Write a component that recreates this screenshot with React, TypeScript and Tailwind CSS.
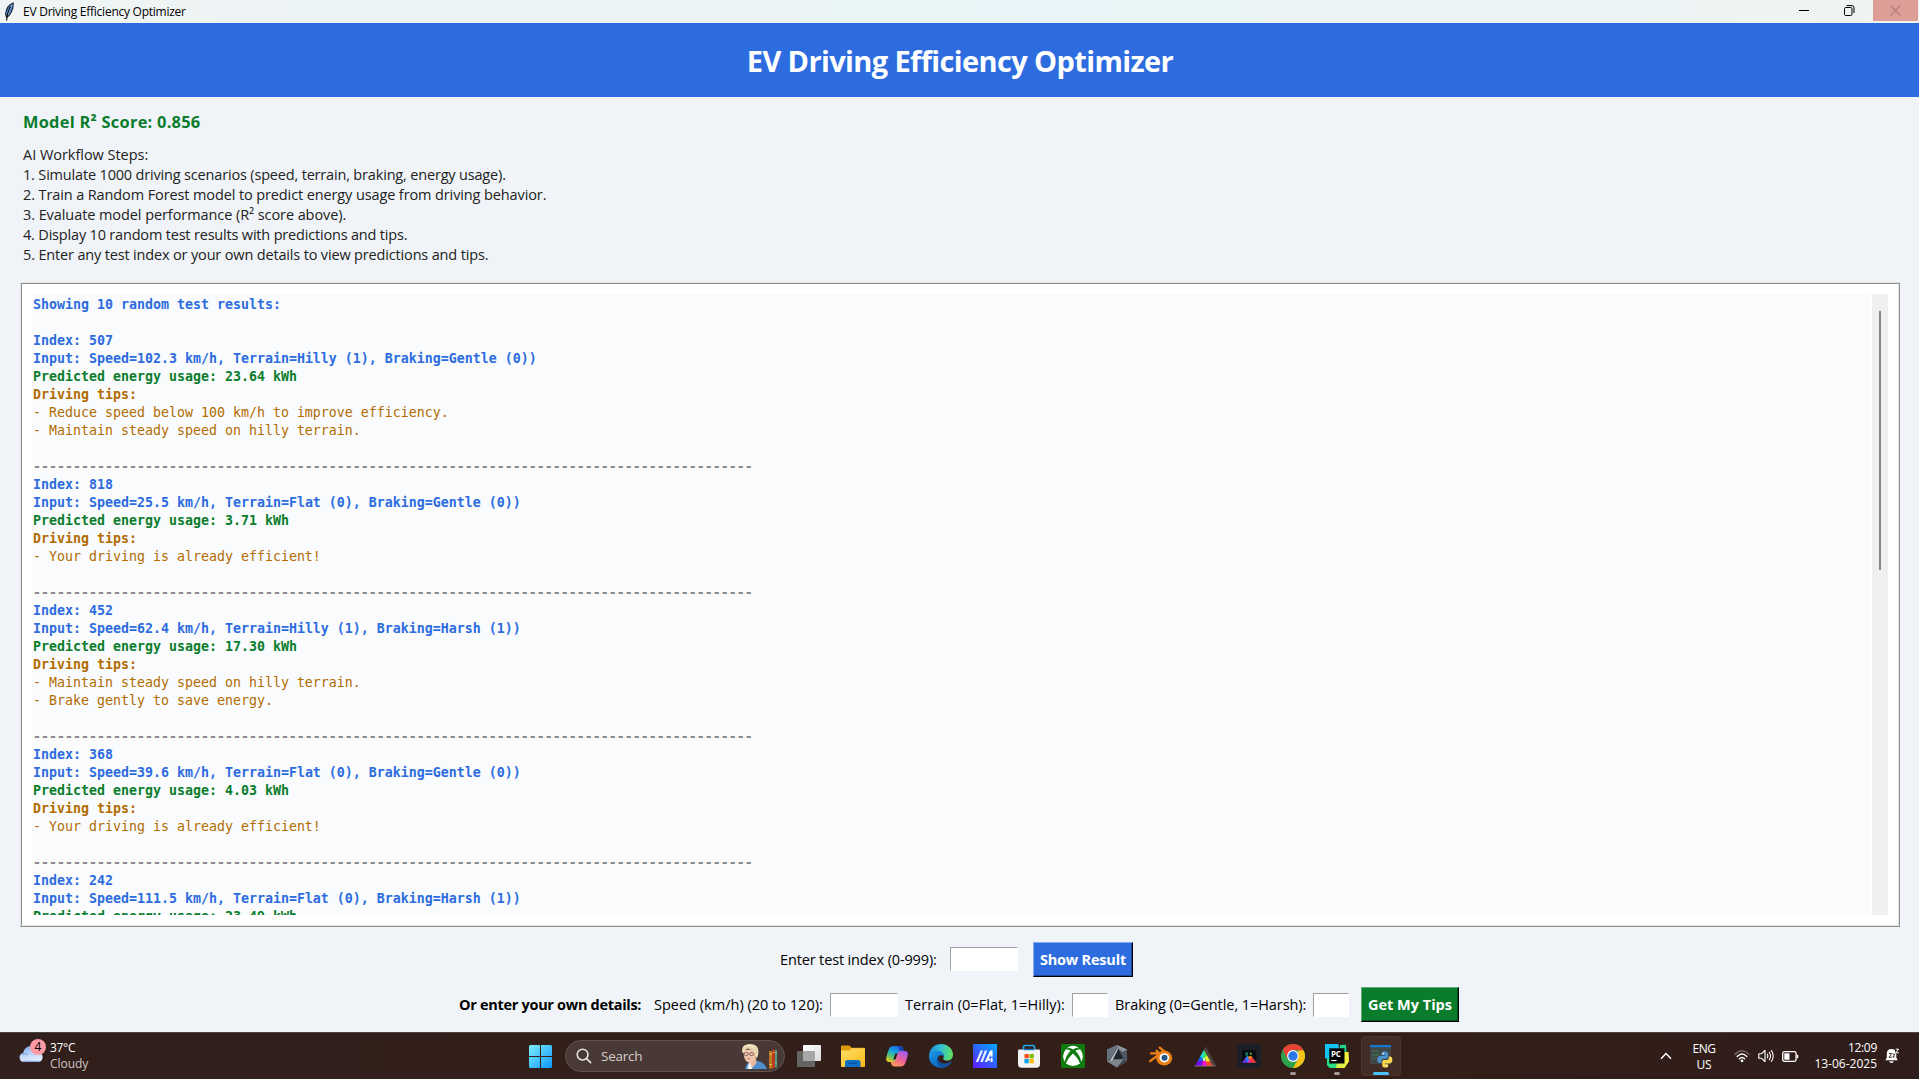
import type { ReactNode } from "react";

type Result = { index: number; input: string; energy: string; tips: string[] };

const results: Result[] = [
  {
    index: 507,
    input: "Speed=102.3 km/h, Terrain=Hilly (1), Braking=Gentle (0))",
    energy: "23.64",
    tips: ["Reduce speed below 100 km/h to improve efficiency.", "Maintain steady speed on hilly terrain."],
  },
  {
    index: 818,
    input: "Speed=25.5 km/h, Terrain=Flat (0), Braking=Gentle (0))",
    energy: "3.71",
    tips: ["Your driving is already efficient!"],
  },
  {
    index: 452,
    input: "Speed=62.4 km/h, Terrain=Hilly (1), Braking=Harsh (1))",
    energy: "17.30",
    tips: ["Maintain steady speed on hilly terrain.", "Brake gently to save energy."],
  },
  {
    index: 368,
    input: "Speed=39.6 km/h, Terrain=Flat (0), Braking=Gentle (0))",
    energy: "4.03",
    tips: ["Your driving is already efficient!"],
  },
  {
    index: 242,
    input: "Speed=111.5 km/h, Terrain=Flat (0), Braking=Harsh (1))",
    energy: "23.49",
    tips: [],
  },
];

const separator = "-".repeat(90);

function FeatherIcon() {
  return (
    <svg width="12" height="20" viewBox="0 0 12 20">
      <path d="M9.2 1 C5 2.5 2 7 1.6 12.5 L2.6 15.5 C6 13.5 9.6 8 9.2 1Z" fill="#4b86c6" stroke="#15202c" strokeWidth="1.1" />
      <path d="M8.3 3 C5.8 6 4.6 9.5 4.2 13" fill="none" stroke="#a9cdf0" strokeWidth="1" />
      <path d="M6.6 4.5 C4 9 3 14 2.6 18.6" fill="none" stroke="#111" strokeWidth="1.1" />
    </svg>
  );
}

function TitleBar() {
  return (
    <header className="flex h-[23px] items-start bg-linear-to-r from-[#f0f4f4] via-[#e9f5f8] via-55% to-[#f0f4f3]">
      <div className="flex h-[23px] flex-1 items-center pl-[4px]">
        <FeatherIcon />
        <span className="pl-[7px] text-[12px] leading-[22px] tracking-[-0.25px] text-black">EV Driving Efficiency Optimizer</span>
      </div>
      <div className="flex h-[21px]">
        <div className="flex w-[45px] justify-center pt-[10px]">
          <div className="mr-[3px] h-px w-[10px] bg-black" />
        </div>
        <div className="flex w-[45px] justify-center pt-[5px]">
          <svg className="mr-[3px]" width="11" height="11" viewBox="0 0 11 11" fill="none" stroke="#000" strokeWidth="1">
            <rect x="0.5" y="2.5" width="7.5" height="8" rx="1.2" />
            <path d="M2.5 0.6 H8 Q10 0.6 10 2.8 V8" />
          </svg>
        </div>
        <div className="mr-px flex w-[45px] justify-center bg-[#dd9e98] pt-[5px]">
          <svg className="mr-px" width="11" height="11" viewBox="0 0 11 11" stroke="#b27f7a" strokeWidth="1.2">
            <path d="M0.5 0.5 L10.5 10.5 M10.5 0.5 L0.5 10.5" />
          </svg>
        </div>
      </div>
    </header>
  );
}

function Steps() {
  return (
    <div className="mt-[11px] text-[14.5px] leading-[20px] whitespace-nowrap text-[#222]">
      <p className="tracking-[-0.03px]">AI Workflow Steps:</p>
      <p className="tracking-[-0.173px]">1. Simulate 1000 driving scenarios (speed, terrain, braking, energy usage).</p>
      <p className="tracking-[-0.112px]">2. Train a Random Forest model to predict energy usage from driving behavior.</p>
      <p className="tracking-[-0.075px]">3. Evaluate model performance (R² score above).</p>
      <p className="tracking-[-0.185px]">4. Display 10 random test results with predictions and tips.</p>
      <p className="tracking-[-0.16px]">5. Enter any test index or your own details to view predictions and tips.</p>
    </div>
  );
}

function ResultBlock({ result }: { result: Result }) {
  return (
    <>
      <p className="font-bold text-[#2d6cdf]">Index: {result.index}</p>
      <p className="font-bold text-[#2d6cdf]">Input: {result.input}</p>
      <p className="font-bold text-[#0a7d2c]">Predicted energy usage: {result.energy} kWh</p>
      <p className="font-bold text-[#b36b00]">Driving tips:</p>
      {result.tips.map((tip) => (
        <p key={tip} className="text-[#b36b00]">- {tip}</p>
      ))}
      <p>&nbsp;</p>
      <p className="font-bold text-[#888]">{separator}</p>
    </>
  );
}

function ResultsPanel() {
  return (
    <section className="mx-5 mr-[19px] h-[645px] border border-t-[#e3e3e3] border-r-[#8f8f8f] border-b-[#8f8f8f] border-l-[#e3e3e3]">
      <div className="flex h-[643px] border border-t-[#8f8f8f] border-r-[#e3e3e3] border-b-[#e3e3e3] border-l-[#8f8f8f] bg-white p-[10px]">
        <div
          className="flex-1 overflow-hidden bg-[#f9fbfd] pt-[2px] pl-px text-[13.29px] leading-[18px] whitespace-pre"
          style={{ fontFamily: '"DejaVu Sans Mono", monospace' }}
        >
          <p className="font-bold text-[#2d6cdf]">Showing 10 random test results:</p>
          <p>&nbsp;</p>
          {results.map((r) => (
            <ResultBlock key={r.index} result={r} />
          ))}
        </div>
        <div className="ml-px flex w-4 justify-center bg-[#f0f0f0] pt-[17px]">
          <div className="h-[259px] w-[2px] bg-[#858585]" />
        </div>
      </div>
    </section>
  );
}

function Entry({ wide = false }: { wide?: boolean }) {
  return (
    <input
      className={`${wide ? "w-[68px]" : "w-[36px]"} h-6 shrink-0 rounded-none border border-t-[#a0a0a0] border-r-white border-b-white border-l-[#a0a0a0] bg-white px-1 text-[14px] outline-none`}
    />
  );
}

function Forms() {
  return (
    <div className="text-[14.5px] whitespace-nowrap text-black">
      <div className="mt-[15px] flex h-[35px] items-center pl-[780px]">
        <label className="w-[170px] tracking-[-0.14px]">Enter test index (0-999):</label>
        <div className="pb-[1px]"><Entry wide /></div>
        <button className="ml-[15px] h-[35px] w-[100px] border border-t-[#86aaf0] border-r-black border-b-black border-l-[#86aaf0] bg-[#2d6cdf] font-bold tracking-[-0.2px] text-white shadow-[inset_-1px_-1px_0_#1e4895]">
          Show Result
        </button>
      </div>
      <div className="mt-[10px] flex h-[35px] items-center pl-[459px]">
        <span className="w-[195px] font-bold tracking-[-0.3px]">Or enter your own details:</span>
        <label className="w-[176px] tracking-[0.01px]">Speed (km/h) (20 to 120):</label>
        <Entry wide />
        <label className="ml-[7px] w-[167px] tracking-[0.04px]">Terrain (0=Flat, 1=Hilly):</label>
        <Entry />
        <label className="ml-[7px] w-[198px] tracking-[-0.07px]">Braking (0=Gentle, 1=Harsh):</label>
        <Entry />
        <button className="ml-[12px] h-[35px] w-[98px] border border-t-[#5cae74] border-r-black border-b-black border-l-[#5cae74] bg-[#0a7d2c] font-bold text-white shadow-[inset_-1px_-1px_0_#07531d]">
          Get My Tips
        </button>
      </div>
    </div>
  );
}

function WeatherIcon() {
  return (
    <div className="relative h-[24px] w-[28px]">
      <svg className="absolute top-[6px] left-0" width="25" height="18" viewBox="0 0 25 18">
        <defs>
          <linearGradient id="cloud" x1="0" y1="0" x2="0.3" y2="1">
            <stop offset="0" stopColor="#7fa5ea" />
            <stop offset="0.55" stopColor="#b9d2fa" />
            <stop offset="1" stopColor="#e3eefd" />
          </linearGradient>
        </defs>
        <path d="M5 17 A4.6 4.6 0 0 1 4.2 7.9 C5 3.5 8.5 1 12.5 1 C17 1 19.6 4 20 7.6 A4.8 4.8 0 0 1 19.5 17Z" fill="url(#cloud)" />
        <path d="M4 16.3 H20.5" stroke="#7fa0e8" strokeWidth="1.2" />
        <path d="M3 9.5 Q6 7.5 9 9.6" fill="none" stroke="#6f98e4" strokeWidth="0.9" />
      </svg>
      <span className="absolute top-0 left-[11px] flex h-4 w-4 items-center justify-center rounded-full bg-[#ff99a4] text-[12px] leading-none text-black">4</span>
    </div>
  );
}

function SearchArt() {
  return (
    <svg width="36" height="27" viewBox="0 0 36 27">
      <path d="M4 26 Q5 20 10 18.5 L15 17.5 Q24 19 26 26Z" fill="#4f8fd0" />
      <path d="M8 16 L15 15 L15.5 20 L10.5 26 L7.5 21Z" fill="#eab79c" />
      <path d="M7 22 L9.5 19.5 L11 26 H6.5Z" fill="#eef3f8" />
      <path d="M3 7 Q2 15 5.5 18.5 Q9 20.5 13 17.5 Q16 14 15.5 6Z" fill="#f1c7ad" />
      <path d="M1 8 Q0.5 1.5 8 1 Q17.5 0.5 17.5 8.5 Q17.6 13 15.3 15.5 Q14.2 12 14 8.5 Q10 6.5 7 5.6 Q4 6 3.2 10.5 Q1.4 10 1 8Z" fill="#e8d7ae" />
      <path d="M3 4 Q8 1 14 4" fill="none" stroke="#fbf0d0" strokeWidth="1.2" />
      <rect x="3.2" y="9.6" width="4" height="3" rx="1.4" fill="none" stroke="#6a4f48" strokeWidth="0.8" />
      <rect x="8.7" y="9.6" width="4" height="3" rx="1.4" fill="none" stroke="#6a4f48" strokeWidth="0.8" />
      <path d="M6 15.8 H9.5" stroke="#b2625c" strokeWidth="0.8" />
      <path d="M28 8 H31.8 V25.5 H28Z" fill="#b8791f" />
      <path d="M31.4 6.5 L34 6.8 V25 H31.4Z" fill="#c5301f" />
      <path d="M33.9 7 H36 V24.5 H33.9Z" fill="#4d9a86" />
      <path d="M28.5 11 H31 M28.5 21.5 H31 M32 9.5 H33.4 M34.4 10 H35.6 M34.4 20 H35.6" stroke="#f2d07c" strokeWidth="0.9" />
    </svg>
  );
}

function StartIcon() {
  return (
    <svg width="23" height="23" viewBox="0 0 23 23">
      <defs>
        <linearGradient id="win" x1="0" y1="0" x2="1" y2="1">
          <stop offset="0" stopColor="#7ceeff" />
          <stop offset="1" stopColor="#1097fb" />
        </linearGradient>
      </defs>
      <path d="M1 0 H11 V11 H0 V1Z M12 0 H22 L23 1 V11 H12Z M0 12 H11 V23 H1 L0 22Z M12 12 H23 V22 L22 23 H12Z" fill="url(#win)" />
    </svg>
  );
}

function TaskViewIcon() {
  return (
    <svg width="24" height="24" viewBox="0 0 24 24">
      <defs>
        <linearGradient id="tv" x1="0" y1="0" x2="1" y2="1">
          <stop offset="0" stopColor="#ffffff" />
          <stop offset="1" stopColor="#dcdcdc" />
        </linearGradient>
      </defs>
      <rect x="0" y="7" width="18" height="16" rx="1" fill="#666563" />
      <rect x="6" y="1" width="18" height="16" rx="1" fill="url(#tv)" />
      <rect x="6" y="7" width="12" height="10" fill="#a8a7a7" />
    </svg>
  );
}

function FolderIcon() {
  return (
    <svg width="24" height="24" viewBox="0 0 24 24">
      <defs>
        <linearGradient id="fold" x1="0" y1="0" x2="1" y2="1">
          <stop offset="0" stopColor="#ffe06a" />
          <stop offset="1" stopColor="#f8b916" />
        </linearGradient>
      </defs>
      <path d="M0 2.5 Q0 1.5 1 1.5 H8.5 L10.5 3.8 H23 Q24 3.8 24 5 V12 H0Z" fill="#e09d0b" />
      <path d="M0 6.5 H8.5 L10.5 4.2 H23.2 Q24 4.2 24 5.2 V22 Q24 23 23 23 H1 Q0 23 0 22Z" fill="url(#fold)" />
      <path d="M4 23 V18.5 Q4 16 6.5 16 H17 Q19.5 16 19.5 18.5 V23Z" fill="#0c70c4" />
      <path d="M7.5 19.3 H16" stroke="#05539c" strokeWidth="1.2" />
    </svg>
  );
}

function CopilotIcon() {
  return (
    <svg width="24" height="24" viewBox="0 0 24 24">
      <defs>
        <linearGradient id="cpA" x1="0.7" y1="0" x2="0.2" y2="1">
          <stop offset="0" stopColor="#1a5fe0" />
          <stop offset="0.4" stopColor="#18a7dd" />
          <stop offset="0.7" stopColor="#5cc46a" />
          <stop offset="1" stopColor="#f0ce1c" />
        </linearGradient>
        <linearGradient id="cpB" x1="0.8" y1="0" x2="0.2" y2="1">
          <stop offset="0" stopColor="#9a5cf2" />
          <stop offset="0.5" stopColor="#f0609c" />
          <stop offset="1" stopColor="#ffa04e" />
        </linearGradient>
      </defs>
      <path d="M8.5 2 H15 Q17.3 2 18 4.3 L18.8 7 H16.5 Q14.4 7 13.8 9 L11.4 16 Q10.7 18 8.8 18 H4.2 Q0.4 18 1.3 13.6 Q2.3 9 4 5 Q5.3 2 8.5 2Z" fill="url(#cpA)" />
      <path d="M13.5 2 H15 Q17.3 2 18 4.3 L18.8 7 H15 Q13.6 6 13.5 2Z" fill="#1b44b8" />
      <path d="M15.5 22.5 H9.5 Q7.2 22.5 6.3 20 L5.5 17.8 H7.8 Q9.8 17.8 10.4 15.8 L12.7 9 Q13.4 7 15.3 7 H19.5 Q23.7 7 22.7 11.3 Q21.7 15.6 20.2 19.3 Q18.8 22.5 15.5 22.5Z" fill="url(#cpB)" />
      <path d="M10.3 9.5 H12.5 L10.6 15.5 H8.3Z" fill="#2f1d18" />
    </svg>
  );
}

function EdgeIcon() {
  return (
    <svg width="24" height="24" viewBox="0 0 24 24">
      <defs>
        <linearGradient id="edTop" x1="0" y1="0.4" x2="1" y2="0.5">
          <stop offset="0" stopColor="#1a8fe0" />
          <stop offset="0.5" stopColor="#34c2cf" />
          <stop offset="1" stopColor="#62e05a" />
        </linearGradient>
        <linearGradient id="edMid" x1="0" y1="0" x2="0.6" y2="1">
          <stop offset="0" stopColor="#1c9ce8" />
          <stop offset="1" stopColor="#0b63bd" />
        </linearGradient>
      </defs>
      <path d="M0 11.5 C0.3 4.8 5.6 0 12 0 C19 0 24 5 24 10.8 C24 14.5 21.4 16.6 18.3 16.6 C15.5 16.6 13.9 15.5 14.2 14.4 C15.6 13 15 9.2 11 7.8 C6.5 6.5 2 8 0 11.5Z" fill="url(#edTop)" />
      <path d="M0 11.8 C1 7.8 5 6.2 8.6 6.7 C12.6 7.3 15 9.8 14.9 12.6 C12.5 10 8.4 11.2 8.2 15.5 C8.1 19.6 11.5 23 15.5 23.5 C7 25.5 -0.4 19.5 0 11.8Z" fill="url(#edMid)" />
      <path d="M9.6 12.2 C7.2 18.2 14.5 21.8 22 17.6 C22.6 17.3 23 17.8 22.6 18.3 C20.4 21.5 17.5 23.4 14.8 23.7 C9.6 23.2 5.4 17.3 9.6 12.2Z" fill="#11529e" />
    </svg>
  );
}

function MyAsusIcon() {
  return (
    <svg width="24" height="24" viewBox="0 0 24 24">
      <defs>
        <linearGradient id="asus" x1="0.1" y1="1" x2="0.9" y2="0">
          <stop offset="0" stopColor="#5a20ff" />
          <stop offset="0.5" stopColor="#2e62ff" />
          <stop offset="1" stopColor="#08a4ff" />
        </linearGradient>
      </defs>
      <rect width="24" height="24" fill="url(#asus)" />
      <path d="M2.8 18 H5.2 L10 6.5 H7.6Z M7.3 18 H9.7 L14.2 6.5 H11.8Z" fill="#e9ecff" />
      <path d="M11.7 18 L17.2 6.5 H19.6 V12.8 H17.6 V10.6 L14 18Z" fill="#fff" />
      <path d="M14.8 14.6 H17 V16.4 H14.2Z M17.6 14 H19.6 V18 H17.6Z" fill="#fff" />
    </svg>
  );
}

function StoreIcon() {
  return (
    <svg width="24" height="24" viewBox="0 0 24 24">
      <path d="M6.5 7 V3 Q6.5 1.5 8 1.5 H16 Q17.5 1.5 17.5 3 V7" fill="none" stroke="#22a5ec" strokeWidth="1.7" />
      <path d="M1 6.5 Q1 5.5 2 5.5 H22 Q23 5.5 23 6.5 V20 Q23 23.8 19.5 23.8 H4.5 Q1 23.8 1 20Z" fill="#f3f3f4" />
      <path d="M6.5 5.5 H17.5" stroke="#1474b8" strokeWidth="1.4" />
      <rect x="7.5" y="10" width="4.3" height="4.3" fill="#f25022" />
      <rect x="12.5" y="10" width="4.3" height="4.3" fill="#7fba00" />
      <rect x="7.5" y="15" width="4.3" height="4.3" fill="#00a4ef" />
      <rect x="12.5" y="15" width="4.3" height="4.3" fill="#ffb900" />
    </svg>
  );
}

function XboxIcon() {
  return (
    <svg width="24" height="24" viewBox="0 0 24 24">
      <rect width="24" height="24" rx="1.5" fill="#107c10" />
      <circle cx="12" cy="12.2" r="9.9" fill="#fff" />
      <path d="M6 4.4 Q8.5 3.4 12 6 Q15.5 3.4 18 4.4 Q16 1.8 12 1.8 Q8 1.8 6 4.4Z" fill="#fff" />
      <path d="M5 4.6 Q8.5 3.2 12 5.4 Q15.5 3.2 19 4.6 L19.4 5.6 Q16.8 5 14.4 6.8 Q19.5 12 20.2 18 L19 19.6 Q17.5 14.5 12 9.4 Q6.5 14.5 5 19.6 L3.8 18 Q4.5 12 9.6 6.8 Q7.2 5 4.6 5.6Z" fill="#107c10" />
    </svg>
  );
}

function ArmouryIcon() {
  return (
    <svg width="24" height="24" viewBox="0 0 24 24">
      <path d="M12 1 L22 5.5 V17.5 L12 23.5 L2 17.5 V5.5Z" fill="#4f5862" />
      <path d="M12 1 L22 5.5 L17.5 8 L12.5 4Z" fill="#8c969f" />
      <path d="M2 5.5 L12 1 L12.5 4 L6 13 L2 17.5Z" fill="#68727c" />
      <path d="M13 4.5 L18.5 14.5 L8 16Z" fill="#20252b" />
      <path d="M6 15.5 L18.8 15.2 L12 23.5 L2 17.5Z" fill="#7d868e" />
      <path d="M12.6 4 L5 16.5 L7.4 16.5 L13 5.5Z" fill="#b4bbc1" />
      <path d="M18.8 15.2 L22 17.5 L12 23.5Z" fill="#3f474f" />
    </svg>
  );
}

function BlenderIcon() {
  return (
    <svg width="24" height="24" viewBox="0 0 24 24">
      <path d="M2 9.4 H10.5 L7.6 6.8 M10.8 3.6 L17 8.8 M1.2 17.2 L10 10.3" fill="none" stroke="#ea7f16" strokeWidth="2.3" strokeLinecap="round" />
      <ellipse cx="15.2" cy="14" rx="8" ry="7.4" fill="#ea7f16" />
      <ellipse cx="15.4" cy="13.8" rx="4.9" ry="4.6" fill="#fff" />
      <circle cx="15.5" cy="13.7" r="3" fill="#265787" />
    </svg>
  );
}

function PrismIcon() {
  return (
    <svg width="24" height="24" viewBox="0 0 24 24">
      <path d="M12.8 2.5 L23 21.5 L19.5 22 L10.5 6.5Z" fill="#4c4442" />
      <path d="M11 6 L14.5 12.3 L11 17.5 L7.3 12.6Z" fill="#43e552" />
      <path d="M11 6 L7.3 12.6 L8.3 17 L11 12Z" fill="#1fd5cf" />
      <path d="M7.3 12.6 L4.8 17 L9 19 L9.5 14.5Z" fill="#1a62ff" />
      <path d="M4.8 17 L2 22 H10 L9.5 17Z" fill="#6d0fe8" />
      <path d="M9.8 16 L14 17.5 L15 22 H9Z" fill="#f013c8" />
      <path d="M12 12.5 L14.5 12.3 L17.4 17.4 L13 18.4Z" fill="#eef02a" />
      <path d="M13 17.5 L17.4 17.4 L20 22 H13.8Z" fill="#f6452a" />
      <path d="M10.3 14.5 L11.3 13.5 L12.4 16.8 L10.6 17Z" fill="#f3fff0" />
      <path d="M1.5 22 H22.5" stroke="#8b8685" strokeWidth="0.8" />
    </svg>
  );
}

function DarkPrismIcon() {
  return (
    <svg width="24" height="24" viewBox="0 0 24 24">
      <rect width="24" height="24" fill="#1c1e28" />
      <rect x="5" y="6" width="14.5" height="12.5" rx="2" fill="#0a0b10" />
      <path d="M8 9 L11 8 L10.6 12 L8.6 11.5Z" fill="#14806f" />
      <path d="M12.5 8.2 L15 9.5 L13.8 11.2Z" fill="#6be03a" />
      <path d="M5 18.7 L8.4 13.8 L10.4 18.7Z" fill="#6a36ee" />
      <path d="M8.4 13.8 L10.6 11.6 L12.5 16 L10.4 18.7Z" fill="#2f83ff" />
      <path d="M10.6 12.6 L14.6 12 L15.5 14.5 L12.3 15.5Z" fill="#ff8b27" />
      <path d="M12.3 15.2 L15.5 13.6 L19.5 18.7 H14Z" fill="#f33a43" />
      <path d="M10.2 18.7 L12.3 15 L14.5 18.7Z" fill="#ec2fae" />
    </svg>
  );
}

function ChromeIcon() {
  return (
    <svg width="24" height="24" viewBox="0 0 24 24">
      <circle cx="12" cy="12" r="12" fill="#2fa24c" />
      <path d="M12 24 L17.2 15 L17 6.2 H22.5 A12 12 0 0 1 12 24Z" fill="#fbc116" />
      <path d="M1.6 6 A12 12 0 0 1 22.5 6.2 H12 L6.8 15Z" fill="#e94335" />
      <circle cx="12" cy="12" r="5.9" fill="#fff" />
      <circle cx="12" cy="12" r="4.7" fill="#2e77e8" />
    </svg>
  );
}

function PyCharmIcon() {
  return (
    <div className="relative h-6 w-6">
      <svg className="absolute inset-0" width="24" height="24" viewBox="0 0 24 24">
        <path d="M0 0 H13.5 L14.5 12 L5 16 L0 14Z" fill="#14c4f2" />
        <path d="M15 1 L21 0.8 L21.5 10 L14 12Z" fill="#1fd68e" />
        <path d="M19 8 H23.6 L24 17.5 L19.5 24 H13 L16 12Z" fill="#f3ef3d" />
        <path d="M2 15 L8 12 L17 18 L14 24 H4.5 L2 21Z" fill="#2adf83" />
        <path d="M12 18 L20 17 L19 22 L14 24 H11Z" fill="#d8ee4a" />
        <rect x="4.3" y="4.3" width="15.2" height="15.2" fill="#000" />
        <rect x="6.3" y="16" width="5.3" height="1.1" fill="#fff" />
      </svg>
      <span className="absolute top-[6px] left-[6px] text-[8px] leading-none font-bold tracking-[-0.2px] text-white">PC</span>
    </div>
  );
}

function PythonWindowIcon() {
  return (
    <svg width="24" height="24" viewBox="0 0 24 24">
      <rect x="1" y="1" width="21" height="19" fill="#42484a" />
      <rect x="1" y="1" width="21" height="2.2" fill="#1277cf" />
      <path d="M3 7 H6 M3 11 H10 M3 14.5 H6 M7 7 H10" stroke="#3b7148" strokeWidth="1.4" />
      <path d="M15.4 7.6 C12.8 7.6 12.6 8.8 12.6 9.8 V11.2 H16 V12 H11 C9.2 12 8.2 13.4 8.2 15.6 C8.2 17.6 9.2 19 10.8 19 H12.4 V17 C12.4 15.4 13.6 14.8 14.6 14.8 H17 C18.4 14.8 19 14 19 12.8 V9.8 C19 8 17.4 7.6 15.4 7.6Z" fill="#4a93cf" />
      <path d="M16.4 23.6 C19 23.6 19.2 22.4 19.2 21.4 V20.2 H16 V19.4 H20.6 C22.4 19.4 23.4 18 23.4 15.8 C23.4 13.6 22.4 12.4 20.8 12.4 H19.8 V14 C19.8 15.4 18.6 16 17.6 16 H15 C13.8 16 13.2 16.8 13.2 18 V21.2 C13.2 23 14.6 23.6 16.4 23.6Z" fill="#fbd750" />
      <circle cx="14.2" cy="9.6" r="0.8" fill="#fff" />
      <circle cx="17.6" cy="21.7" r="0.8" fill="#fff" />
    </svg>
  );
}

type Task = { name: string; icon: ReactNode; state?: "open" | "active" };

const tasks: Task[] = [
  { name: "task-view", icon: <TaskViewIcon /> },
  { name: "explorer", icon: <FolderIcon /> },
  { name: "copilot", icon: <CopilotIcon /> },
  { name: "edge", icon: <EdgeIcon /> },
  { name: "myasus", icon: <MyAsusIcon /> },
  { name: "store", icon: <StoreIcon /> },
  { name: "xbox", icon: <XboxIcon /> },
  { name: "armoury", icon: <ArmouryIcon /> },
  { name: "blender", icon: <BlenderIcon /> },
  { name: "prism", icon: <PrismIcon /> },
  { name: "dark-prism", icon: <DarkPrismIcon /> },
  { name: "chrome", icon: <ChromeIcon />, state: "open" },
  { name: "pycharm", icon: <PyCharmIcon />, state: "open" },
  { name: "python", icon: <PythonWindowIcon />, state: "active" },
];

function TaskButton({ task }: { task: Task }) {
  return (
    <div className="flex w-[44px] justify-center">
      <div
        className={`relative flex h-[40px] w-[40px] items-center justify-center rounded-[4px] ${
          task.state === "active" ? "bg-[#422d26] shadow-[inset_0_0_0_1px_#4a352e]" : ""
        }`}
      >
        {task.icon}
        {task.state === "open" && <span className="absolute bottom-[1px] left-[17px] h-[3px] w-[6px] rounded-full bg-[#a29895]" />}
        {task.state === "active" && <span className="absolute bottom-[1px] left-[12px] h-[3px] w-[16px] rounded-full bg-[#4cc2ff]" />}
      </div>
    </div>
  );
}

function Tray() {
  return (
    <div className="flex h-full items-center text-[12px] leading-[16px] text-white">
      <svg width="12" height="8" viewBox="0 0 12 8" fill="none" stroke="#fff" strokeWidth="1.5">
        <path d="M1 6.8 L6 1.6 L11 6.8" />
      </svg>
      <div className="ml-[19px] w-[26px] pt-px text-center">
        <div className="tracking-[-0.45px]">ENG</div>
        <div className="tracking-[-0.15px]">US</div>
      </div>
      <svg className="ml-[17px]" width="16" height="14" viewBox="0 0 16 14" fill="none" strokeWidth="1.4" strokeLinecap="round">
        <path d="M1 5.2 Q8 -1.8 15 5.2" stroke="#78665f" />
        <path d="M3.2 7.5 Q8 2.6 12.8 7.5" stroke="#fff" />
        <path d="M5.4 9.8 Q8 7.2 10.6 9.8" stroke="#fff" />
        <circle cx="8" cy="11.8" r="1.4" fill="#fff" />
      </svg>
      <svg className="ml-[8px]" width="17" height="14" viewBox="0 0 17 14" fill="none" stroke="#fff" strokeWidth="1.1" strokeLinecap="round" strokeLinejoin="round">
        <path d="M0.8 4.8 H3.4 L7 1.4 V12.6 L3.4 9.2 H0.8Z" />
        <path d="M9.2 5 Q10.4 7 9.2 9 M11.3 3.2 Q13.6 7 11.3 10.8 M13.4 1.5 Q17 7 13.4 12.5" />
      </svg>
      <svg className="ml-[7px]" width="17" height="11" viewBox="0 0 17 11">
        <rect x="0.7" y="0.7" width="13.4" height="9.6" rx="1.8" fill="none" stroke="#fff" strokeWidth="1.3" />
        <rect x="2.3" y="2.3" width="5.2" height="6.4" rx="0.6" fill="#fff" />
        <path d="M14.8 3.8 H15.6 Q16.4 3.8 16.4 5.5 Q16.4 7.2 15.6 7.2 H14.8Z" fill="#fff" />
      </svg>
      <div className="ml-[14px] w-[64px] text-right">
        <div className="tracking-[-0.3px]">12:09</div>
        <div>13-06-2025</div>
      </div>
      <div className="relative ml-[8px] h-[16px] w-[15px]">
        <svg width="15" height="16" viewBox="0 0 15 16">
          <path d="M6.5 1 Q11.3 1 11.3 6 V9.5 L12.7 12.3 H0.4 L1.8 9.5 V6 Q1.8 1 6.5 1Z" fill="#fff" />
          <path d="M4.2 13.2 H8.8 Q8.4 15 6.5 15 Q4.6 15 4.2 13.2Z" fill="#fff" />
          <path d="M4 5.5 H6.8 L4 9.3 H6.8 M7.8 6.2 H9.8 L7.8 9 H9.8" fill="none" stroke="#2f1c1a" strokeWidth="0.9" />
          <path d="M9.4 0 H15 V5.6 H10.6Z" fill="#301d19" />
          <path d="M10.8 1.2 H13.6 L10.8 4.8 H13.8" fill="none" stroke="#fff" strokeWidth="1" />
        </svg>
      </div>
    </div>
  );
}

function Taskbar() {
  return (
    <footer className="flex h-[47px] items-center border-t border-[#4d423f] bg-linear-to-r from-[#311f1c] via-[#331f17] via-70% to-[#2f1d1b] text-white">
      <div className="flex w-[528px] items-center pl-[19px] text-[12px] leading-[16px]">
        <div className="mb-[10px]"><WeatherIcon /></div>
        <div className="ml-[3px]">
          <div className="tracking-[-0.3px]">37°C</div>
          <div className="tracking-[-0.05px] text-[#cfc8c6]">Cloudy</div>
        </div>
      </div>
      <div className="flex w-[37px] items-center pl-px"><StartIcon /></div>
      <div className="flex h-[32px] w-[220px] items-center rounded-full border border-[#63534f] bg-[#493936] pl-[10px]">
        <svg width="16" height="16" viewBox="0 0 16 16" fill="none" stroke="#e6e2e1" strokeWidth="1.6" strokeLinecap="round">
          <circle cx="6.6" cy="6.6" r="5.4" />
          <path d="M10.6 10.6 L14.6 14.6" />
        </svg>
        <span className="ml-[9px] w-[140px] text-[13.5px] tracking-[-0.25px] text-[#d3cdcb]">Search</span>
        <SearchArt />
      </div>
      <div className="ml-[2px] flex">
        {tasks.map((t) => (
          <TaskButton key={t.name} task={t} />
        ))}
      </div>
      <div className="ml-auto pr-[19px]"><Tray /></div>
    </footer>
  );
}

export default function App() {
  return (
    <div
      className="flex h-[1079px] w-full flex-col overflow-hidden bg-[#f0f4f8]"
      style={{ fontFamily: '"Open Sans", "Noto Sans", sans-serif' }}
    >
      <TitleBar />
      <div className="flex h-[74px] items-center justify-center bg-[#2d6cdf] pt-px pl-px">
        <h1 className="text-[29px] leading-[40px] font-bold tracking-[-0.62px] text-white">EV Driving Efficiency Optimizer</h1>
      </div>
      <div className="h-[185px] pt-[13px] pl-[23px]">
        <h2 className="text-[16.4px] leading-[24px] font-bold tracking-[0.26px] text-[#0a7d2c]">Model R² Score: 0.856</h2>
        <Steps />
      </div>
      <ResultsPanel />
      <Forms />
      <div className="mt-auto"><Taskbar /></div>
    </div>
  );
}
